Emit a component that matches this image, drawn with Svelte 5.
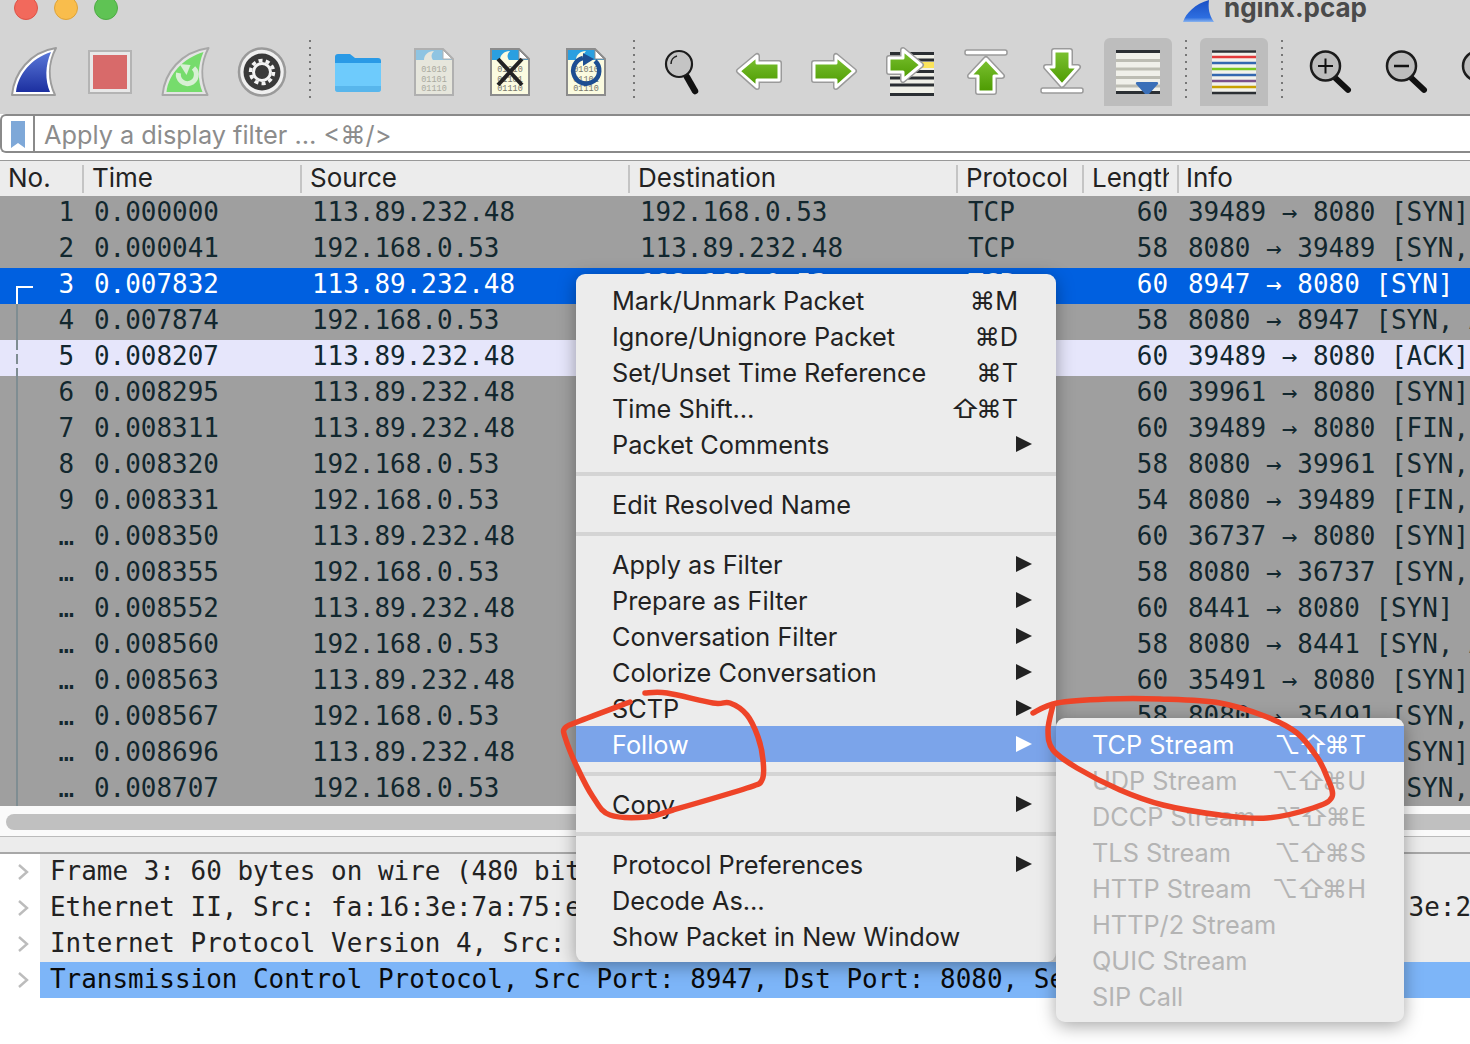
<script>
	const src = '113.89.232.48';
	const dst = '192.168.0.53';
	const packets = [
		['1', '0.000000', src, dst, '60', '39489 → 8080 [SYN]'],
		['2', '0.000041', dst, src, '58', '8080 → 39489 [SYN, ACK]'],
		['3', '0.007832', src, dst, '60', '8947 → 8080 [SYN]'],
		['4', '0.007874', dst, src, '58', '8080 → 8947 [SYN, ACK]'],
		['5', '0.008207', src, dst, '60', '39489 → 8080 [ACK]'],
		['6', '0.008295', src, dst, '60', '39961 → 8080 [SYN]'],
		['7', '0.008311', src, dst, '60', '39489 → 8080 [FIN, ACK]'],
		['8', '0.008320', dst, src, '58', '8080 → 39961 [SYN, ACK]'],
		['9', '0.008331', dst, src, '54', '8080 → 39489 [FIN, ACK]'],
		['…', '0.008350', src, dst, '60', '36737 → 8080 [SYN]'],
		['…', '0.008355', dst, src, '58', '8080 → 36737 [SYN, ACK]'],
		['…', '0.008552', src, dst, '60', '8441 → 8080 [SYN]'],
		['…', '0.008560', dst, src, '58', '8080 → 8441 [SYN, ACK]'],
		['…', '0.008563', src, dst, '60', '35491 → 8080 [SYN]'],
		['…', '0.008567', dst, src, '58', '8080 → 35491 [SYN, ACK]'],
		['…', '0.008696', src, dst, '60', '60112 → 8080 [SYN]'],
		['…', '0.008707', dst, src, '58', '8080 → 60112 [SYN, ACK]']
	];

	const details = [
		'Frame 3: 60 bytes on wire (480 bits), 60 bytes captured (480 bits)',
		'Ethernet II, Src: fa:16:3e:7a:75:e9 (fa:16:3e:7a:75:e9), Dst: fa:16:3e:2f:a1:0c (fa:16:3e:2f:a1:0c)',
		'Internet Protocol Version 4, Src: 113.89.232.48, Dst: 192.168.0.53',
		'Transmission Control Protocol, Src Port: 8947, Dst Port: 8080, Seq: 0, Len: 0'
	];

	const menu = [
		[
			{ label: 'Mark/Unmark Packet', key: '⌘M' },
			{ label: 'Ignore/Unignore Packet', key: '⌘D' },
			{ label: 'Set/Unset Time Reference', key: '⌘T' },
			{ label: 'Time Shift…', key: '⇧⌘T' },
			{ label: 'Packet Comments', sub: true }
		],
		[{ label: 'Edit Resolved Name' }],
		[
			{ label: 'Apply as Filter', sub: true },
			{ label: 'Prepare as Filter', sub: true },
			{ label: 'Conversation Filter', sub: true },
			{ label: 'Colorize Conversation', sub: true },
			{ label: 'SCTP', sub: true },
			{ label: 'Follow', sub: true, active: true }
		],
		[{ label: 'Copy', sub: true }],
		[
			{ label: 'Protocol Preferences', sub: true },
			{ label: 'Decode As…' },
			{ label: 'Show Packet in New Window' }
		]
	];

	const follow = [
		{ label: 'TCP Stream', key: '⌥⇧⌘T', active: true },
		{ label: 'UDP Stream', key: '⌥⇧⌘U' },
		{ label: 'DCCP Stream', key: '⌥⇧⌘E' },
		{ label: 'TLS Stream', key: '⌥⇧⌘S' },
		{ label: 'HTTP Stream', key: '⌥⇧⌘H' },
		{ label: 'HTTP/2 Stream' },
		{ label: 'QUIC Stream' },
		{ label: 'SIP Call' }
	];

	// smooth a hand-drawn looking stroke through a list of points
	function smooth(pts) {
		let d = `M${pts[0][0]} ${pts[0][1]}`;
		for (let i = 0; i < pts.length - 1; i++) {
			const p0 = pts[i - 1] || pts[i];
			const p1 = pts[i];
			const p2 = pts[i + 1];
			const p3 = pts[i + 2] || p2;
			const c1 = [p1[0] + (p2[0] - p0[0]) / 6, p1[1] + (p2[1] - p0[1]) / 6];
			const c2 = [p2[0] - (p3[0] - p1[0]) / 6, p2[1] - (p3[1] - p1[1]) / 6];
			d += `C${c1[0].toFixed(1)} ${c1[1].toFixed(1)} ${c2[0].toFixed(1)} ${c2[1].toFixed(1)} ${p2[0]} ${p2[1]}`;
		}
		return d;
	}

	const loopLeft = smooth([
		[645, 693], [667, 693], [713, 703], [730, 703], [747, 715], [758, 737], [763, 760], [762, 780],
		[747, 788], [673, 810], [647, 817], [610, 815], [593, 797], [577, 767], [565, 737], [565, 728],
		[577, 722], [630, 702]
	]);
	const loopRight = smooth([
		[1033, 713], [1057, 703], [1107, 699], [1160, 699], [1220, 703], [1267, 717], [1297, 733], [1317, 757],
		[1327, 777], [1332, 797], [1313, 808], [1267, 818], [1220, 815], [1163, 805], [1120, 790], [1077, 768],
		[1053, 750], [1048, 730], [1053, 705]
	]);
</script>

{#snippet arrow(d)}
	<path {d} fill="none" stroke="#9a9a9a" stroke-width="6" stroke-linejoin="round" />
	<path {d} fill="url(#green)" stroke="#fff" stroke-width="3" stroke-linejoin="round" />
{/snippet}

{#snippet bar(y)}
	<rect x="13" {y} width="42" height="5" rx="2" fill="#fff" stroke="#9a9a9a" stroke-width="1.5" />
{/snippet}

{#snippet lens(cx, cy, r)}
	<path d="M{cx + r * 0.65} {cy + r * 0.8}L{cx + r * 1.55} {cy + r * 1.65}" stroke="#111" stroke-width="6" stroke-linecap="round" />
	<circle {cx} {cy} {r} fill="#bdbdbd" stroke="#1c1c1c" stroke-width="2.5" />
{/snippet}

{#snippet doc(tint, dim)}
	<path d="M15 11H43L53 21V57H15Z" fill={tint} stroke={dim ? '#b0b0b0' : '#8c8c8c'} stroke-width="2" />
	<path d="M16 12H43L52 21V22H16Z" fill={dim ? '#8ec4e2' : '#2a9fe0'} />
	<path d="M24 22C24 17 28 13 34 13C31 16 31 19 33 22Z" fill={tint} />
	<path d="M43 12V21H52Z" fill="#fff" stroke={dim ? '#b0b0b0' : '#8c8c8c'} />
	<text x="34" y="34" class="bits" class:faded={dim}>01010</text>
	<text x="34" y="43.500" class="bits" class:faded={dim}>01101</text>
	<text x="34" y="52.500" class="bits" class:faded={dim}>01110</text>
{/snippet}

{#snippet keys(key)}
	<span class="key">
		{#each [...key] as ch}
			<span class:wide={ch === '⇧'}>{ch}</span>
		{/each}
	</span>
{/snippet}

<div class="window">
	<header class="titlebar">
		<div class="lights">
			<span class="light red"></span>
			<span class="light yellow"></span>
			<span class="light green"></span>
		</div>
		<div class="title">
			<svg width="32" height="24" viewBox="0 0 32 24">
				<path d="M0 22C3 13 12 4 26 0C25 8 26 15 31 22Z" fill="url(#titleFin)" />
			</svg>
			<span>nginx.pcap</span>
		</div>
	</header>

	<div class="toolbar">
		<svg class="defs" width="0" height="0">
			<defs>
				<linearGradient id="blueFin" x1="0" y1="0" x2="0" y2="1">
					<stop offset="0" stop-color="#5a78d8" />
					<stop offset="1" stop-color="#1c2fa0" />
				</linearGradient>
				<linearGradient id="titleFin" x1="0" y1="0" x2="0" y2="1">
					<stop offset="0" stop-color="#1a4fc4" />
					<stop offset="0.8" stop-color="#2d6ee0" />
					<stop offset="1" stop-color="#8ab4ee" />
				</linearGradient>
				<linearGradient id="green" x1="0" y1="0" x2="0" y2="1">
					<stop offset="0" stop-color="#7cc232" />
					<stop offset="1" stop-color="#4c9a00" />
				</linearGradient>
			</defs>
		</svg>

		<button class="tool">
			<svg viewBox="0 0 68 68">
				<path d="M12 57C14 35 30 14 56 10C48 25 48 42 55 57Z" fill="#fff" stroke="#9c9c9c" stroke-width="2" stroke-linejoin="round" />
				<path d="M16 54C18 36 32 20 51 14C45 28 45 42 50 54Z" fill="url(#blueFin)" />
			</svg>
		</button>
		<button class="tool">
			<svg viewBox="0 0 68 68">
				<rect x="13" y="13" width="42" height="42" fill="#e8e8e8" stroke="#b4b4b4" stroke-width="2" />
				<rect x="17" y="17" width="34" height="34" fill="#d86a6a" />
			</svg>
		</button>
		<button class="tool">
			<svg viewBox="0 0 68 68">
				<g transform="translate(1.500 0)">
					<path d="M9 57C11 35 27 14 55 10C47 25 47 42 54 57Z" fill="#e4e4e4" stroke="#a8a8a8" stroke-width="2" stroke-linejoin="round" />
					<path d="M13 54C15 36 30 20 50 14C44 28 44 42 49 54Z" fill="#76dc6c" />
					<path d="M25 35A9 9 0 1 0 40 30" fill="none" stroke="#d8f0d4" stroke-width="5" />
					<path d="M26 26L33 37L37 27Z" fill="#d8f0d4" />
				</g>
			</svg>
		</button>
		<button class="tool">
			<svg viewBox="0 0 68 68">
				<ellipse cx="34" cy="34" rx="23" ry="23.5" fill="#f0f0f0" stroke="#9a9a9a" stroke-width="2.5" />
				<circle cx="34" cy="34" r="18.5" fill="#3a3a3a" />
				<circle cx="34" cy="34" r="11.5" fill="none" stroke="#f4f4f4" stroke-width="3.5" stroke-dasharray="4 3.2" />
				<circle cx="34" cy="34" r="8.5" fill="none" stroke="#f4f4f4" stroke-width="3" />
			</svg>
		</button>
		<span class="sep"></span>
		<button class="tool">
			<svg viewBox="0 0 68 68">
				<path d="M11 19A3 3 0 0 1 14 16H26L31 20H54A3 3 0 0 1 57 23V30H11Z" fill="#2a9ae6" />
				<path d="M11 25H57V51A3 3 0 0 1 54 54H14A3 3 0 0 1 11 51Z" fill="#6ecbfc" />
				<path d="M11 48H57V51A3 3 0 0 1 54 54H14A3 3 0 0 1 11 51Z" fill="#58b6ec" />
			</svg>
		</button>
		<button class="tool">
			<svg viewBox="0 0 68 68">
				{@render doc('#e6e6dc', true)}
			</svg>
		</button>
		<button class="tool">
			<svg viewBox="0 0 68 68">
				{@render doc('#fbfbe0', false)}
				<path d="M22 21L46 47M46 21L22 47" stroke="#222" stroke-width="4" />
			</svg>
		</button>
		<button class="tool">
			<svg viewBox="0 0 68 68">
				{@render doc('#fbfbe0', false)}
				<path d="M31 20A13 13 0 1 0 43 23" fill="none" stroke="#1d4e92" stroke-width="4.5" />
				<path d="M31 15L42 21L31 28Z" fill="#1d4e92" />
			</svg>
		</button>
		<span class="sep"></span>
		<button class="tool">
			<svg viewBox="0 0 68 68">
				<path d="M39 39L47 53" stroke="#111" stroke-width="6.5" stroke-linecap="round" />
				<circle cx="31" cy="26" r="13" fill="#c4c4c4" stroke="#1c1c1c" stroke-width="2.2" />
				<path d="M23 26A8 8 0 0 1 29 18" fill="none" stroke="#222" stroke-width="1.5" />
			</svg>
		</button>
		<button class="tool">
			<svg viewBox="0 0 68 68">
				{@render arrow('M15 33L33 18V25H55V42H33V49Z')}
			</svg>
		</button>
		<button class="tool">
			<svg viewBox="0 0 68 68">
				{@render arrow('M54 33L36 18V25H14V42H36V49Z')}
			</svg>
		</button>
		<button class="tool">
			<svg viewBox="0 0 68 68">
				<rect x="14" y="14" width="44" height="44" fill="#f0f0e8" />
				<rect x="46" y="24" width="12" height="6" fill="#fbe45c" />
				<path d="M14 15.500H58M14 22H58M14 33.500H58M14 40H58M14 47H58M14 56.500H58" stroke="#2b2f33" stroke-width="3" />
				{@render arrow('M13 20H27V12L45 27L27 42V34H13Z')}
			</svg>
		</button>
		<button class="tool">
			<svg viewBox="0 0 68 68">
				{@render bar(12)}
				{@render arrow('M34 21L50 38H42V54H26V38H18Z')}
			</svg>
		</button>
		<button class="tool">
			<svg viewBox="0 0 68 68">
				{@render bar(50)}
				{@render arrow('M34 47L50 29H42V13H26V29H18Z')}
			</svg>
		</button>
		<button class="tool active">
			<svg viewBox="0 0 68 68">
				<rect x="12" y="12" width="44" height="44" fill="#f0f0ea" />
				<path d="M12 22.500H56M12 31H56M12 39.500H56M12 48H56" stroke="#bdbdb4" stroke-width="3" />
				<path d="M12 13.500H56M12 54.500H56" stroke="#2b2f33" stroke-width="3" />
				<path d="M33 44H53C54 44 54.500 45 54 46L45 56H41L32 46C31.500 45 32 44 33 44Z" fill="#3a6fb8" />
			</svg>
		</button>
		<span class="sep"></span>
		<button class="tool active">
			<svg viewBox="0 0 68 68">
				<rect x="12" y="12" width="44" height="44" fill="#f2f2ec" />
				<path d="M12 13.500H56M12 55H56" stroke="#2b2f33" stroke-width="2.500" />
				<path d="M12 19H56" stroke="#e23a3a" stroke-width="2.500" />
				<path d="M12 25H56" stroke="#3468b0" stroke-width="2.500" />
				<path d="M12 31H56" stroke="#78c81e" stroke-width="2.500" />
				<path d="M12 37H56" stroke="#3468b0" stroke-width="2.500" />
				<path d="M12 43H56" stroke="#7a4f88" stroke-width="2.500" />
				<path d="M12 49H56" stroke="#c8a000" stroke-width="2.500" />
			</svg>
		</button>
		<span class="sep"></span>
		<button class="tool">
			<svg viewBox="0 0 68 68">
				{@render lens(29.500, 28, 14.500)}
				<path d="M22 28H37M29.500 20.500V35.500" stroke="#111" stroke-width="2" />
			</svg>
		</button>
		<button class="tool">
			<svg viewBox="0 0 68 68">
				{@render lens(29.500, 28, 14.500)}
				<path d="M22 28H37" stroke="#111" stroke-width="2.500" />
			</svg>
		</button>
		<button class="tool">
			<svg viewBox="0 0 68 68">
				{@render lens(29.500, 28, 14.500)}
			</svg>
		</button>
	</div>

	<div class="filter">
		<span class="bookmark">
			<svg width="16" height="28" viewBox="0 0 16 28">
				<path d="M1 1H15V28L8 23L1 28Z" fill="#7ea8d8" />
			</svg>
		</span>
		<span class="placeholder">Apply a display filter … &lt;⌘/&gt;</span>
	</div>

	<div class="list-head">
		<span>No.</span>
		<span>Time</span>
		<span>Source</span>
		<span>Destination</span>
		<span>Protocol</span>
		<span><b class="clip">Length</b></span>
		<span class="last">Info</span>
	</div>

	<div class="rows">
		{#each packets as p, i}
			<div class="row" class:selected={i === 2} class:related={i === 4}>
				<span class="no">{p[0]}</span>
				<span class="time">{p[1]}</span>
				<span>{p[2]}</span>
				<span>{p[3]}</span>
				<span>TCP</span>
				<span class="len">{p[4]}</span>
				<span class="info">{p[5]}</span>
				{#if i === 2}
					<span class="hook"></span>
				{:else if i === 4}
					<span class="link dashed"></span>
				{:else if i > 2}
					<span class="link"></span>
				{/if}
			</div>
		{/each}
	</div>

	<div class="scroller"><span class="thumb"></span></div>
	<div class="splitter"></div>

	<div class="tree">
		{#each details as line, i}
			<div class="node">
				<svg class="chev" width="12" height="18" viewBox="0 0 12 18">
					<path d="M2 2L10 9L2 16" fill="none" stroke="#bcbcbc" stroke-width="2.4" />
				</svg>
				<span class="node-text" class:picked={i === 3}>{line}</span>
			</div>
		{/each}
	</div>

	<div class="menu main">
		{#each menu as group, g}
			{#if g > 0}<div class="divider"></div>{/if}
			{#each group as item}
				<div class="item" class:on={item.active}>
					<span>{item.label}</span>
					{#if item.key}{@render keys(item.key)}{/if}
					{#if item.sub}<span class="tri"></span>{/if}
				</div>
			{/each}
		{/each}
	</div>

	<div class="menu submenu">
		{#each follow as item}
			<div class="item" class:on={item.active} class:off={!item.active}>
				<span>{item.label}</span>
				{#if item.key}{@render keys(item.key)}{/if}
			</div>
		{/each}
	</div>

	<svg class="ink" width="1470" height="1044" viewBox="0 0 1470 1044">
		<path d={loopLeft} />
		<path d={loopRight} />
	</svg>
</div>

<style>
	:global(body) {
		margin: 0;
		overflow: hidden;
	}

	.window {
		position: relative;
		width: 1470px;
		height: 1044px;
		overflow: hidden;
		background: #fff;
		font-family: Inter, 'Liberation Sans', sans-serif;
		font-size: 25.300px;
		color: #222;
	}

	.titlebar {
		height: 38px;
		display: flex;
		justify-content: space-between;
		background: #d4d4d4;
		overflow: hidden;
	}

	.lights {
		display: flex;
		gap: 16px;
		padding-left: 14px;
		margin-top: -4px;
	}

	.light {
		width: 24px;
		height: 24px;
		border-radius: 50%;
		box-sizing: border-box;
	}

	.red { background: #f2695c; border: 1px solid #dd5347; }
	.yellow { background: #f9bd4c; border: 1px solid #dea338; }
	.green { background: #5fc354; border: 1px solid #4eab45; }

	.title {
		display: flex;
		align-items: flex-start;
		gap: 9px;
		padding-right: 103px;
		margin-top: -9px;
		font-size: 26px;
		font-weight: 700;
		color: #4a4a4a;
		line-height: 34px;
	}

	.title svg {
		margin-top: 9px;
	}

	.toolbar {
		height: 76px;
		display: flex;
		gap: 8px;
		align-items: flex-start;
		background: #d4d4d4;
		overflow: hidden;
		box-sizing: border-box;
	}

	.defs {
		position: absolute;
	}

	.tool {
		flex: none;
		width: 68px;
		height: 68px;
		padding: 0;
		border: 0;
		background: none;
		border-radius: 6px 6px 0 0;
	}

	.tool svg {
		display: block;
		width: 68px;
		height: 68px;
	}

	.tool.active {
		background: #bdbdbd;
	}

	.bits {
		font-family: 'Liberation Mono', monospace;
		font-size: 8.500px;
		text-anchor: middle;
		fill: #77776c;
	}

	.bits.faded {
		fill: #aaaaa0;
	}

	.sep {
		flex: none;
		width: 2px;
		height: 62px;
		margin: 2px 5px 0;
		background: repeating-linear-gradient(#777 0 2px, transparent 2px 7px);
	}

	.filter {
		height: 39px;
		display: flex;
		align-items: stretch;
		box-sizing: border-box;
		background: #fff;
		border: solid #8a8a8a;
		border-width: 2px 0 2px 2px;
		border-radius: 6px 0 0 6px;
	}

	.bookmark {
		width: 33px;
		box-sizing: border-box;
		padding: 4px 0 0 8px;
		border-right: 2px solid #8a8a8a;
	}

	.placeholder {
		padding-left: 9px;
		line-height: 38px;
		color: #8c8c8c;
	}

	.list-head {
		margin-top: 7px;
		height: 36px;
		display: grid;
		grid-template-columns: 84px 218px 328px 328px 126px 95px 1fr;
		align-items: center;
		box-sizing: border-box;
		background: #ececec;
		border-top: 1px solid #999;
		font-size: 26px;
		color: #222;
	}

	.list-head span {
		height: 28px;
		line-height: 26px;
		padding-left: 8px;
		box-sizing: border-box;
		border-right: 2px solid #c4c4c4;
		overflow: hidden;
		white-space: nowrap;
	}

	.list-head .last {
		border: 0;
		padding-left: 7px;
	}

	.clip {
		display: block;
		width: 77px;
		overflow: hidden;
		font-weight: 400;
	}

	.rows {
		height: 610px;
		overflow: hidden;
		font-family: 'DejaVu Sans Mono', monospace;
		font-size: 25.950px;
		color: #12272e;
	}

	.row {
		position: relative;
		height: 36px;
		display: grid;
		grid-template-columns: 74px 20px 218px 328px 328px 120px 80px 20px 1fr;
		line-height: 32px;
		white-space: nowrap;
		background: #9f9f9f;
	}

	.row.selected {
		background: #0060e0;
		color: #fff;
	}

	.row.related {
		background: #e6e6fb;
	}

	.no {
		text-align: right;
	}

	.time {
		grid-column: 3;
	}

	.len {
		text-align: right;
	}

	.info {
		grid-column: 9;
		overflow: hidden;
	}

	/* conversation marker drawn over the row */
	.hook {
		position: absolute;
		left: 16px;
		top: 18px;
		width: 15px;
		height: 18px;
		border: solid #fff;
		border-width: 2px 0 0 2px;
	}

	.link {
		position: absolute;
		left: 16px;
		top: 0;
		bottom: 0;
		width: 2px;
		background: #7f8d92;
	}

	.link.dashed {
		background: repeating-linear-gradient(#7f8d92 0 10px, transparent 10px 14px);
	}

	.scroller {
		height: 31px;
		box-sizing: border-box;
		padding: 8px 0 0 6px;
		background: #fafafa;
		border-bottom: 1px solid #bbb;
		overflow: hidden;
	}

	.thumb {
		display: block;
		height: 16px;
		margin-right: -12px;
		border-radius: 8px;
		background: #c0c0c0;
	}

	.splitter {
		height: 15px;
		background: #ececec;
		border-bottom: 2px solid #a8a8a8;
	}

	.tree {
		font-family: 'DejaVu Sans Mono', monospace;
		font-size: 25.950px;
		color: #222;
	}

	.node {
		height: 36px;
		display: flex;
		align-items: center;
		overflow: hidden;
	}

	.chev {
		flex: none;
		margin: 0 11px 0 17px;
	}

	.node-text {
		flex: 1;
		align-self: stretch;
		line-height: 34px;
		padding-left: 10px;
		background: #ececec;
		white-space: nowrap;
		overflow: hidden;
	}

	.node-text.picked {
		background: #7db5f8;
		color: #0a0a0a;
	}

	.menu {
		position: absolute;
		box-sizing: border-box;
		background: #ececec;
		border-radius: 9px;
		box-shadow: 0 4px 18px rgba(0, 0, 0, 0.35);
	}

	.main {
		left: 576px;
		top: 274px;
		width: 480px;
		height: 688px;
		padding-top: 8px;
	}

	.submenu {
		left: 1056px;
		top: 718px;
		width: 348px;
		height: 304px;
		padding-top: 8px;
	}

	.item {
		position: relative;
		height: 36px;
		line-height: 38px;
		padding: 0 38px 0 36px;
		display: flex;
		justify-content: space-between;
		white-space: nowrap;
		color: #222;
	}

	.item.on {
		background: #7ba4ea;
		color: #fff;
	}

	.item.off {
		color: #b4b4b4;
	}

	.key {
		display: flex;
		font-family: Inter, 'DejaVu Sans', sans-serif;
	}

	.wide {
		width: 24px;
		text-align: center;
		transform: scaleX(1.15);
	}

	.tri {
		position: absolute;
		right: 24px;
		top: 10px;
		border-left: 16px solid currentColor;
		border-top: 8px solid transparent;
		border-bottom: 8px solid transparent;
	}

	.divider {
		height: 4px;
		margin: 10px 0;
		background: #d4d4d4;
	}

	.ink {
		position: absolute;
		left: 0;
		top: 0;
		pointer-events: none;
	}

	.ink path {
		fill: none;
		stroke: #ee4428;
		stroke-width: 5.500;
		stroke-linecap: round;
		stroke-linejoin: round;
	}
</style>
